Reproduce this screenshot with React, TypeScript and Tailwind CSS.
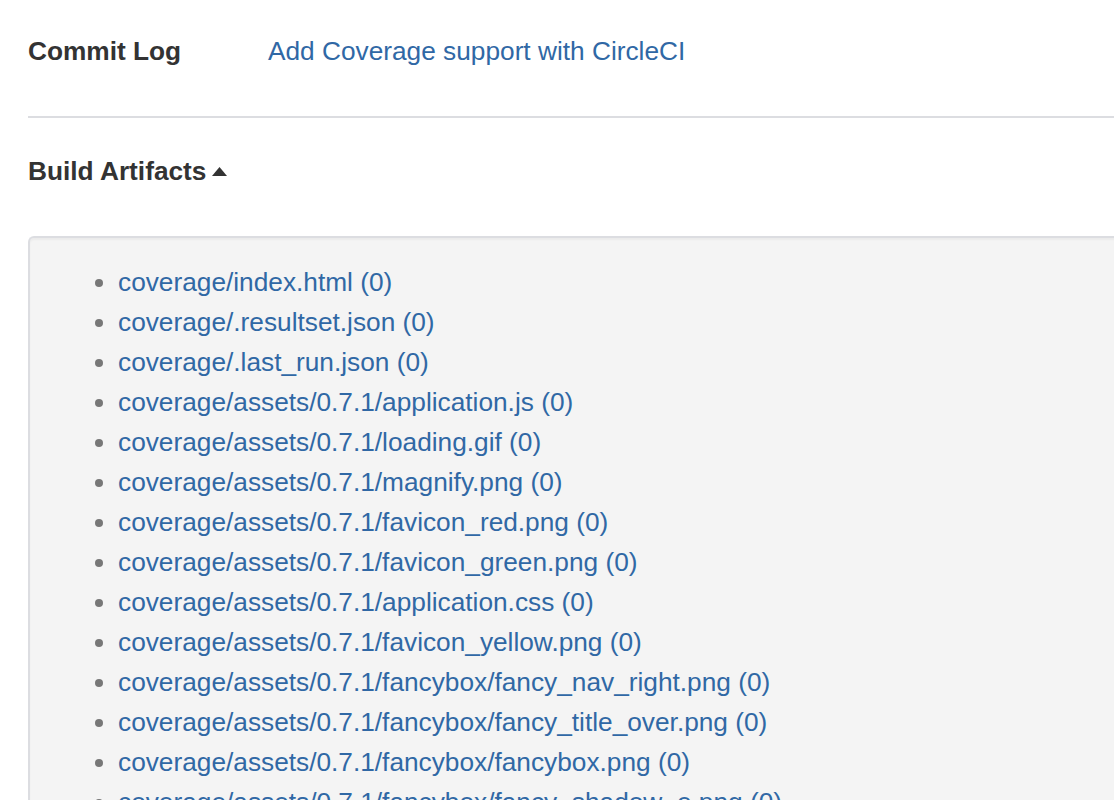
const artifacts = [
  'coverage/index.html',
  'coverage/.resultset.json',
  'coverage/.last_run.json',
  'coverage/assets/0.7.1/application.js',
  'coverage/assets/0.7.1/loading.gif',
  'coverage/assets/0.7.1/magnify.png',
  'coverage/assets/0.7.1/favicon_red.png',
  'coverage/assets/0.7.1/favicon_green.png',
  'coverage/assets/0.7.1/application.css',
  'coverage/assets/0.7.1/favicon_yellow.png',
  'coverage/assets/0.7.1/fancybox/fancy_nav_right.png',
  'coverage/assets/0.7.1/fancybox/fancy_title_over.png',
  'coverage/assets/0.7.1/fancybox/fancybox.png',
  'coverage/assets/0.7.1/fancybox/fancy_shadow_e.png',
];

export default function App() {
  return (
    <div className="h-[800px] w-full overflow-hidden bg-white pl-[28px] pt-[31px] text-[26.25px] leading-[40px] text-[#333333] font-['Liberation_Sans',Arial,sans-serif]">
      {/* Commit row */}
      <div className="flex">
        <div className="w-[240px] shrink-0 font-bold">Commit Log</div>
        <a href="#" className="text-[#3068a5]">
          Add Coverage support with CircleCI
        </a>
      </div>

      <div className="mt-[45px] h-[2px] bg-[#dcdde1]" />

      {/* Artifacts header */}
      <div className="mt-[33px] flex items-center font-bold">
        Build Artifacts
        <svg className="ml-[6px]" width="15" height="9" viewBox="0 0 15 9">
          <path d="M0 9 L7.5 0 L15 9 Z" fill="#333333" />
        </svg>
      </div>

      <div className="-mr-4 mt-[45px] rounded-tl-[6px] border-l-[2px] border-t-[2px] border-[#dcdde1] bg-[#f4f4f4] shadow-[inset_0_2px_2px_rgba(0,0,0,0.04)]">
        <ul className="list-disc pl-[88px] pt-[24px] text-[#777777]">
          {artifacts.map((name) => (
            <li key={name}>
              <a href="#" className="text-[#3068a5]">
                {name} (0)
              </a>
            </li>
          ))}
        </ul>
      </div>
    </div>
  );
}
